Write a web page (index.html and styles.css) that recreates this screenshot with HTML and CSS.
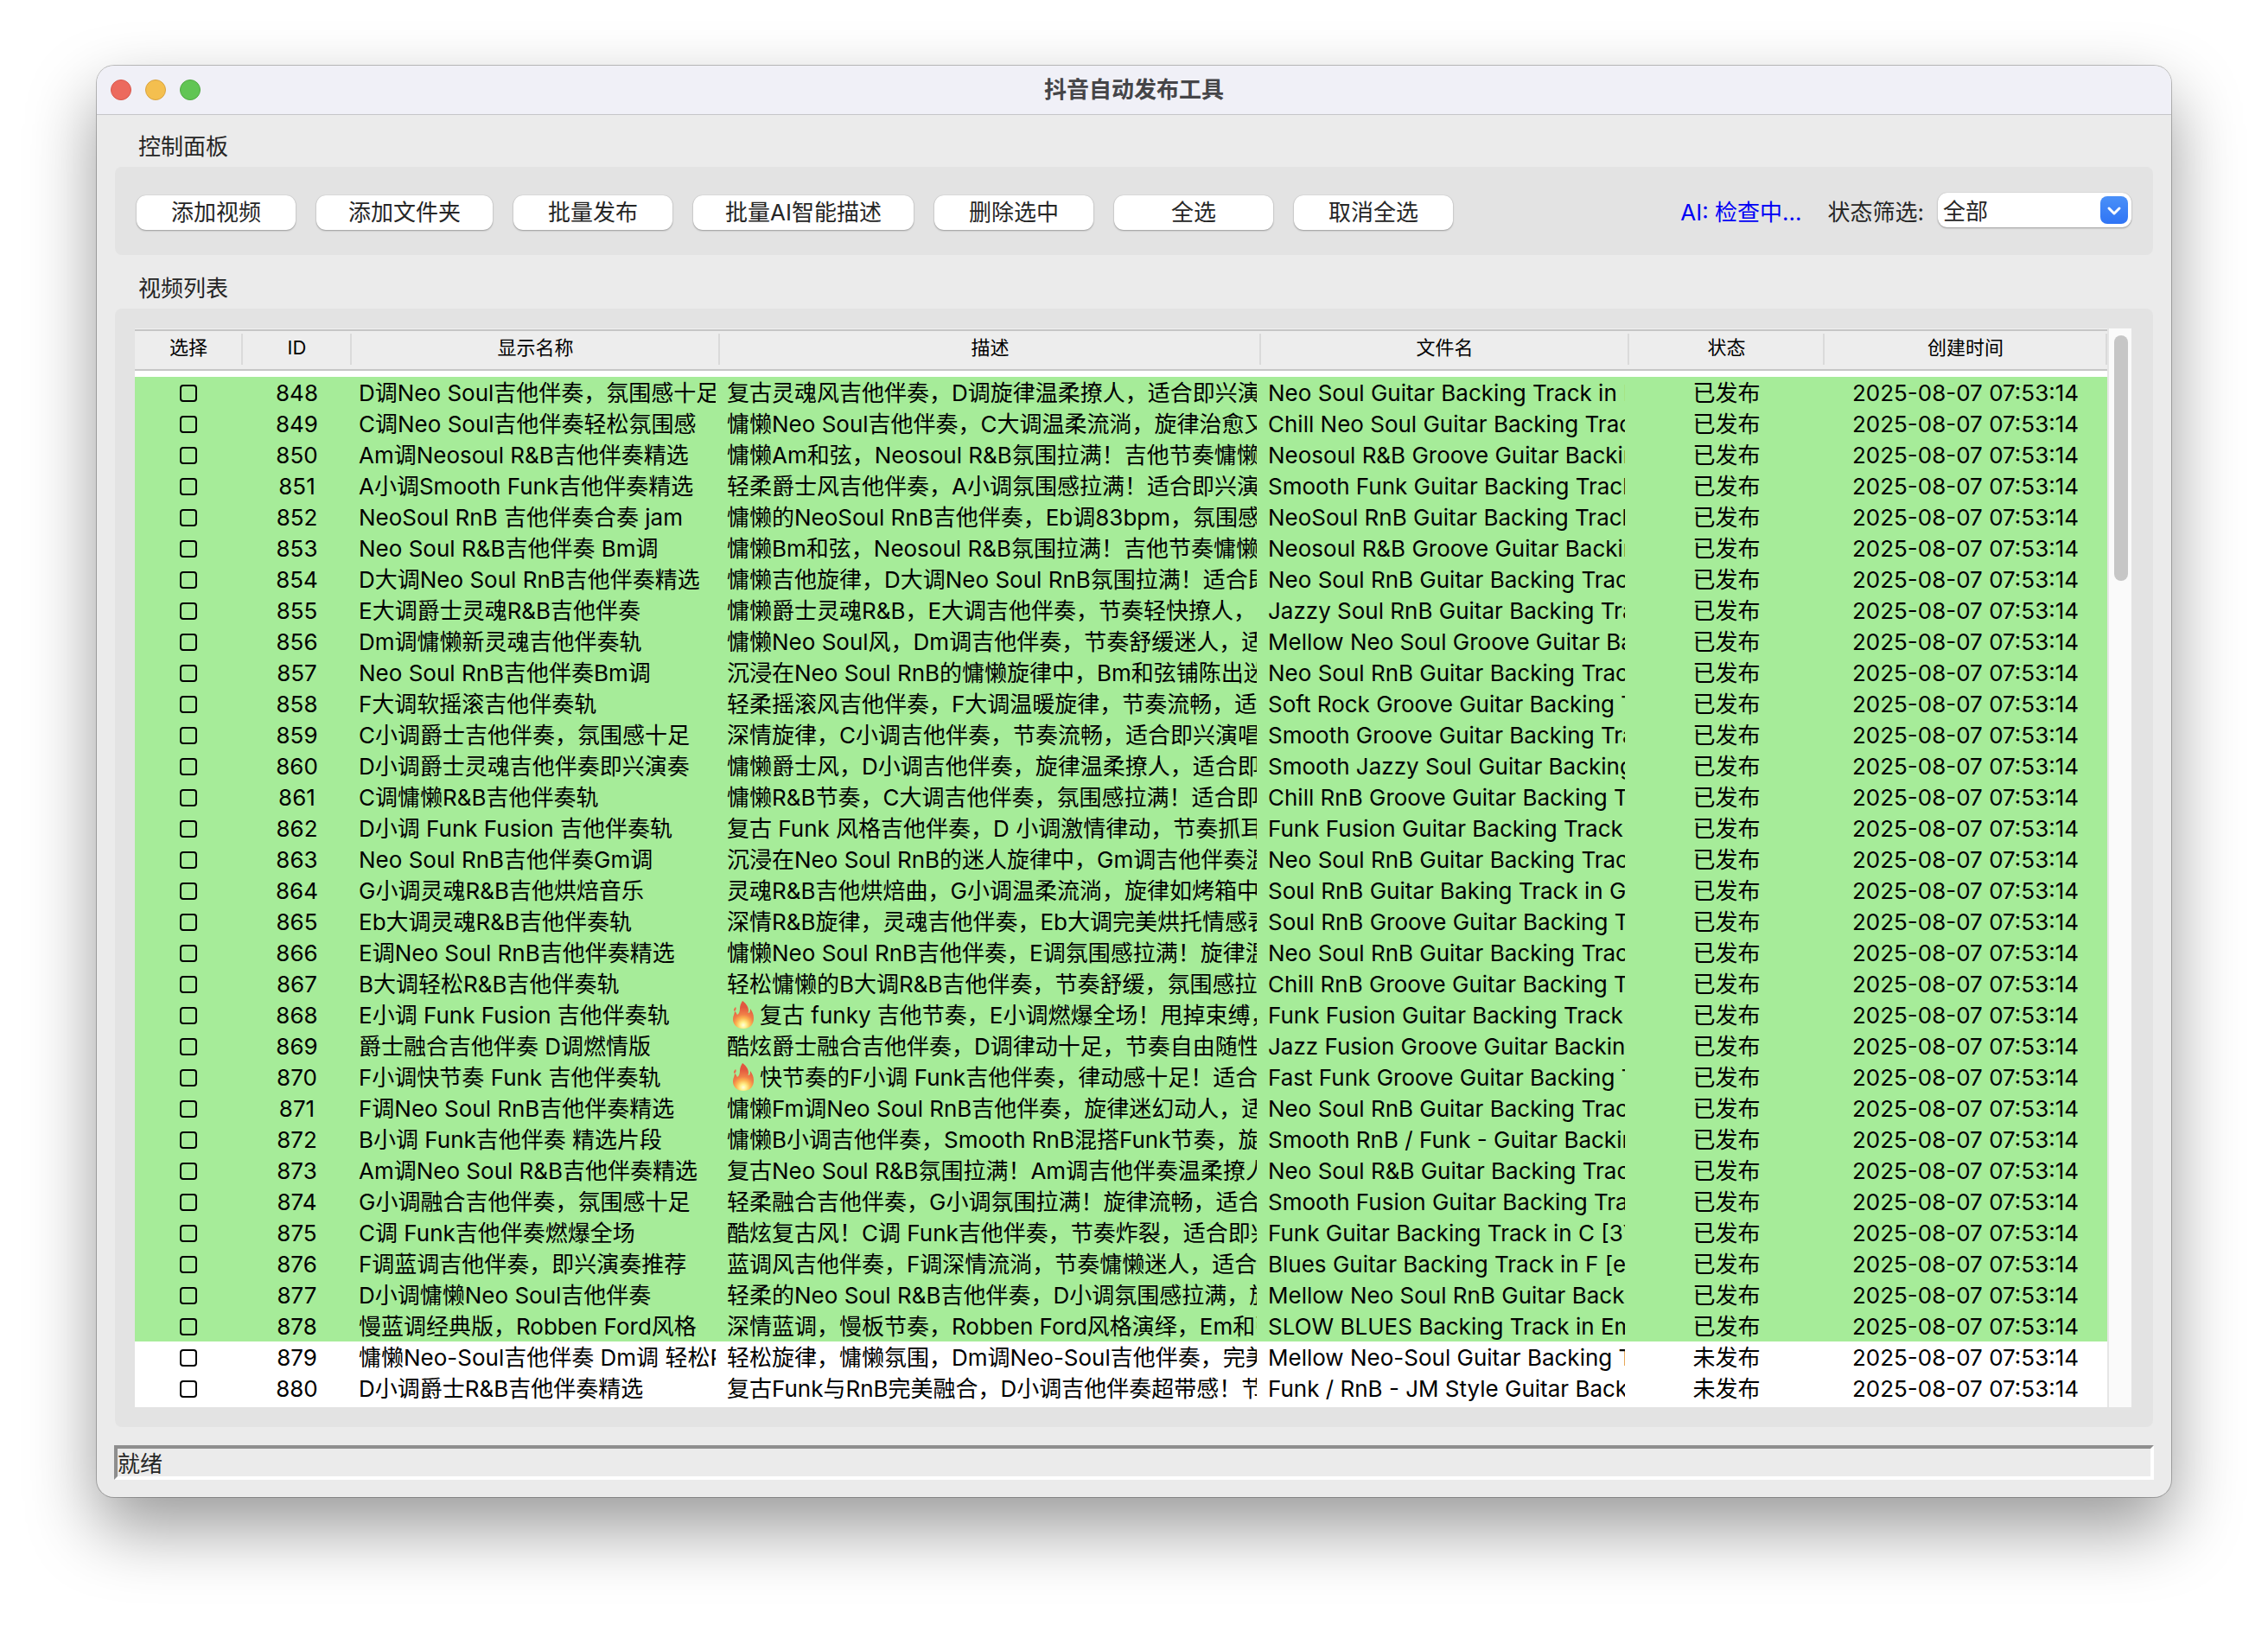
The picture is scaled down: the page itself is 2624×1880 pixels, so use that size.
FILE: index.html
```html
<!DOCTYPE html>
<html lang="zh-CN">
<head>
<meta charset="utf-8">
<meta name="viewport" content="width=device-width, initial-scale=1">
<title>抖音自动发布工具</title>
<link rel="stylesheet" href="styles.css">
</head>
<body>
<svg class="sprite" width="0" height="0" aria-hidden="true">
  <defs>
    <radialGradient id="flame" gradientUnits="userSpaceOnUse" cx="13" cy="28" r="26">
      <stop offset="0" stop-color="#fffde0"/>
      <stop offset="0.14" stop-color="#fff08a"/>
      <stop offset="0.32" stop-color="#fbb350"/>
      <stop offset="0.48" stop-color="#f08048"/>
      <stop offset="0.8" stop-color="#e2563f"/>
    </radialGradient>
    <symbol id="fire" viewBox="0 0 26 32">
      <path fill="url(#flame)" d="M12 0C14 1 19 6 19 11C19 13 18 14 19 14C21 14 21 11 21 9C23 12 25 15 25 20C25 27 21 32 13 32C5 32 1 27 1 21C1 17 3 15 3 12C5 13 5 15 6 16C8 15 9 12 9 9C9 6 10 3 12 0Z"/>
      <path fill="#ea6a4c" d="M4 7C5 8 5 10 3 12C1 11 2 9 4 7Z"/>
    </symbol>
  </defs>
</svg>

<div class="window">
  <header class="titlebar">
    <div class="lights">
      <button class="light light-close" type="button" aria-label="关闭"></button>
      <button class="light light-min" type="button" aria-label="最小化"></button>
      <button class="light light-zoom" type="button" aria-label="缩放"></button>
    </div>
    <h1 class="title">抖音自动发布工具</h1>
  </header>

  <main class="content">
    <h2 class="group-label">控制面板</h2>
    <section class="panel controls">
      <button class="btn" type="button">添加视频</button>
      <button class="btn" type="button">添加文件夹</button>
      <button class="btn" type="button">批量发布</button>
      <button class="btn" type="button">批量AI智能描述</button>
      <button class="btn" type="button">删除选中</button>
      <button class="btn" type="button">全选</button>
      <button class="btn" type="button">取消全选</button>
      <span class="ai-status">AI: 检查中...</span>
      <label class="filter-label" for="status-filter">状态筛选:</label>
      <div class="combo">
        <select id="status-filter" class="combo-select">
          <option>全部</option>
          <option>已发布</option>
          <option>未发布</option>
        </select>
        <span class="combo-arrow" aria-hidden="true">
          <svg viewBox="0 0 32 32" width="32" height="32"><path d="M10 14L16 20L22 14" fill="none" stroke="#fff" stroke-width="3" stroke-linecap="round" stroke-linejoin="round"/></svg>
        </span>
      </div>
    </section>

    <h2 class="group-label">视频列表</h2>
    <section class="panel list">
      <table class="videos">
        <colgroup>
          <col class="c-check"><col class="c-id"><col class="c-name"><col class="c-desc"><col class="c-file"><col class="c-state"><col class="c-time">
        </colgroup>
        <thead>
          <tr><th>选择</th><th>ID</th><th>显示名称</th><th>描述</th><th>文件名</th><th>状态</th><th>创建时间</th></tr>
        </thead>
        <tbody>
          <tr class="done"><td><input type="checkbox" aria-label="选择 848"></td><td>848</td><td>D调Neo Soul吉他伴奏，氛围感十足</td><td>复古灵魂风吉他伴奏，D调旋律温柔撩人，适合即兴演奏</td><td>Neo Soul Guitar Backing Track in D</td><td>已发布</td><td>2025-08-07 07:53:14</td></tr>
          <tr class="done"><td><input type="checkbox" aria-label="选择 849"></td><td>849</td><td>C调Neo Soul吉他伴奏轻松氛围感</td><td>慵懒Neo Soul吉他伴奏，C大调温柔流淌，旋律治愈又</td><td>Chill Neo Soul Guitar Backing Track</td><td>已发布</td><td>2025-08-07 07:53:14</td></tr>
          <tr class="done"><td><input type="checkbox" aria-label="选择 850"></td><td>850</td><td>Am调Neosoul R&amp;B吉他伴奏精选</td><td>慵懒Am和弦，Neosoul R&amp;B氛围拉满！吉他节奏慵懒</td><td>Neosoul R&amp;B Groove Guitar Backing</td><td>已发布</td><td>2025-08-07 07:53:14</td></tr>
          <tr class="done"><td><input type="checkbox" aria-label="选择 851"></td><td>851</td><td>A小调Smooth Funk吉他伴奏精选</td><td>轻柔爵士风吉他伴奏，A小调氛围感拉满！适合即兴演奏</td><td>Smooth Funk Guitar Backing Track</td><td>已发布</td><td>2025-08-07 07:53:14</td></tr>
          <tr class="done"><td><input type="checkbox" aria-label="选择 852"></td><td>852</td><td>NeoSoul RnB 吉他伴奏合奏 jam</td><td>慵懒的NeoSoul RnB吉他伴奏，Eb调83bpm，氛围感</td><td>NeoSoul RnB Guitar Backing Track</td><td>已发布</td><td>2025-08-07 07:53:14</td></tr>
          <tr class="done"><td><input type="checkbox" aria-label="选择 853"></td><td>853</td><td>Neo Soul R&amp;B吉他伴奏 Bm调</td><td>慵懒Bm和弦，Neosoul R&amp;B氛围拉满！吉他节奏慵懒</td><td>Neosoul R&amp;B Groove Guitar Backing</td><td>已发布</td><td>2025-08-07 07:53:14</td></tr>
          <tr class="done"><td><input type="checkbox" aria-label="选择 854"></td><td>854</td><td>D大调Neo Soul RnB吉他伴奏精选</td><td>慵懒吉他旋律，D大调Neo Soul RnB氛围拉满！适合即兴</td><td>Neo Soul RnB Guitar Backing Track</td><td>已发布</td><td>2025-08-07 07:53:14</td></tr>
          <tr class="done"><td><input type="checkbox" aria-label="选择 855"></td><td>855</td><td>E大调爵士灵魂R&amp;B吉他伴奏</td><td>慵懒爵士灵魂R&amp;B，E大调吉他伴奏，节奏轻快撩人，</td><td>Jazzy Soul RnB Guitar Backing Track</td><td>已发布</td><td>2025-08-07 07:53:14</td></tr>
          <tr class="done"><td><input type="checkbox" aria-label="选择 856"></td><td>856</td><td>Dm调慵懒新灵魂吉他伴奏轨</td><td>慵懒Neo Soul风，Dm调吉他伴奏，节奏舒缓迷人，适合</td><td>Mellow Neo Soul Groove Guitar Backing</td><td>已发布</td><td>2025-08-07 07:53:14</td></tr>
          <tr class="done"><td><input type="checkbox" aria-label="选择 857"></td><td>857</td><td>Neo Soul RnB吉他伴奏Bm调</td><td>沉浸在Neo Soul RnB的慵懒旋律中，Bm和弦铺陈出迷人</td><td>Neo Soul RnB Guitar Backing Track</td><td>已发布</td><td>2025-08-07 07:53:14</td></tr>
          <tr class="done"><td><input type="checkbox" aria-label="选择 858"></td><td>858</td><td>F大调软摇滚吉他伴奏轨</td><td>轻柔摇滚风吉他伴奏，F大调温暖旋律，节奏流畅，适合</td><td>Soft Rock Groove Guitar Backing Track</td><td>已发布</td><td>2025-08-07 07:53:14</td></tr>
          <tr class="done"><td><input type="checkbox" aria-label="选择 859"></td><td>859</td><td>C小调爵士吉他伴奏，氛围感十足</td><td>深情旋律，C小调吉他伴奏，节奏流畅，适合即兴演唱</td><td>Smooth Groove Guitar Backing Track</td><td>已发布</td><td>2025-08-07 07:53:14</td></tr>
          <tr class="done"><td><input type="checkbox" aria-label="选择 860"></td><td>860</td><td>D小调爵士灵魂吉他伴奏即兴演奏</td><td>慵懒爵士风，D小调吉他伴奏，旋律温柔撩人，适合即兴</td><td>Smooth Jazzy Soul Guitar Backing</td><td>已发布</td><td>2025-08-07 07:53:14</td></tr>
          <tr class="done"><td><input type="checkbox" aria-label="选择 861"></td><td>861</td><td>C调慵懒R&amp;B吉他伴奏轨</td><td>慵懒R&amp;B节奏，C大调吉他伴奏，氛围感拉满！适合即兴</td><td>Chill RnB Groove Guitar Backing Track</td><td>已发布</td><td>2025-08-07 07:53:14</td></tr>
          <tr class="done"><td><input type="checkbox" aria-label="选择 862"></td><td>862</td><td>D小调 Funk Fusion 吉他伴奏轨</td><td>复古 Funk 风格吉他伴奏，D 小调激情律动，节奏抓耳</td><td>Funk Fusion Guitar Backing Track</td><td>已发布</td><td>2025-08-07 07:53:14</td></tr>
          <tr class="done"><td><input type="checkbox" aria-label="选择 863"></td><td>863</td><td>Neo Soul RnB吉他伴奏Gm调</td><td>沉浸在Neo Soul RnB的迷人旋律中，Gm调吉他伴奏温柔</td><td>Neo Soul RnB Guitar Backing Track</td><td>已发布</td><td>2025-08-07 07:53:14</td></tr>
          <tr class="done"><td><input type="checkbox" aria-label="选择 864"></td><td>864</td><td>G小调灵魂R&amp;B吉他烘焙音乐</td><td>灵魂R&amp;B吉他烘焙曲，G小调温柔流淌，旋律如烤箱中</td><td>Soul RnB Guitar Baking Track in G</td><td>已发布</td><td>2025-08-07 07:53:14</td></tr>
          <tr class="done"><td><input type="checkbox" aria-label="选择 865"></td><td>865</td><td>Eb大调灵魂R&amp;B吉他伴奏轨</td><td>深情R&amp;B旋律，灵魂吉他伴奏，Eb大调完美烘托情感表达</td><td>Soul RnB Groove Guitar Backing Track</td><td>已发布</td><td>2025-08-07 07:53:14</td></tr>
          <tr class="done"><td><input type="checkbox" aria-label="选择 866"></td><td>866</td><td>E调Neo Soul RnB吉他伴奏精选</td><td>慵懒Neo Soul RnB吉他伴奏，E调氛围感拉满！旋律温柔</td><td>Neo Soul RnB Guitar Backing Track</td><td>已发布</td><td>2025-08-07 07:53:14</td></tr>
          <tr class="done"><td><input type="checkbox" aria-label="选择 867"></td><td>867</td><td>B大调轻松R&amp;B吉他伴奏轨</td><td>轻松慵懒的B大调R&amp;B吉他伴奏，节奏舒缓，氛围感拉</td><td>Chill RnB Groove Guitar Backing Track</td><td>已发布</td><td>2025-08-07 07:53:14</td></tr>
          <tr class="done"><td><input type="checkbox" aria-label="选择 868"></td><td>868</td><td>E小调 Funk Fusion 吉他伴奏轨</td><td><svg class="fire" role="img" aria-label="火"><use href="#fire"/></svg>复古 funky 吉他节奏，E小调燃爆全场！甩掉束缚，</td><td>Funk Fusion Guitar Backing Track</td><td>已发布</td><td>2025-08-07 07:53:14</td></tr>
          <tr class="done"><td><input type="checkbox" aria-label="选择 869"></td><td>869</td><td>爵士融合吉他伴奏 D调燃情版</td><td>酷炫爵士融合吉他伴奏，D调律动十足，节奏自由随性</td><td>Jazz Fusion Groove Guitar Backing</td><td>已发布</td><td>2025-08-07 07:53:14</td></tr>
          <tr class="done"><td><input type="checkbox" aria-label="选择 870"></td><td>870</td><td>F小调快节奏 Funk 吉他伴奏轨</td><td><svg class="fire" role="img" aria-label="火"><use href="#fire"/></svg>快节奏的F小调 Funk吉他伴奏，律动感十足！适合</td><td>Fast Funk Groove Guitar Backing Track</td><td>已发布</td><td>2025-08-07 07:53:14</td></tr>
          <tr class="done"><td><input type="checkbox" aria-label="选择 871"></td><td>871</td><td>F调Neo Soul RnB吉他伴奏精选</td><td>慵懒Fm调Neo Soul RnB吉他伴奏，旋律迷幻动人，适合</td><td>Neo Soul RnB Guitar Backing Track</td><td>已发布</td><td>2025-08-07 07:53:14</td></tr>
          <tr class="done"><td><input type="checkbox" aria-label="选择 872"></td><td>872</td><td>B小调 Funk吉他伴奏 精选片段</td><td>慵懒B小调吉他伴奏，Smooth RnB混搭Funk节奏，旋律</td><td>Smooth RnB / Funk - Guitar Backing</td><td>已发布</td><td>2025-08-07 07:53:14</td></tr>
          <tr class="done"><td><input type="checkbox" aria-label="选择 873"></td><td>873</td><td>Am调Neo Soul R&amp;B吉他伴奏精选</td><td>复古Neo Soul R&amp;B氛围拉满！Am调吉他伴奏温柔撩人</td><td>Neo Soul R&amp;B Guitar Backing Track</td><td>已发布</td><td>2025-08-07 07:53:14</td></tr>
          <tr class="done"><td><input type="checkbox" aria-label="选择 874"></td><td>874</td><td>G小调融合吉他伴奏，氛围感十足</td><td>轻柔融合吉他伴奏，G小调氛围拉满！旋律流畅，适合</td><td>Smooth Fusion Guitar Backing Track</td><td>已发布</td><td>2025-08-07 07:53:14</td></tr>
          <tr class="done"><td><input type="checkbox" aria-label="选择 875"></td><td>875</td><td>C调 Funk吉他伴奏燃爆全场</td><td>酷炫复古风！C调 Funk吉他伴奏，节奏炸裂，适合即兴</td><td>Funk Guitar Backing Track in C [3Y</td><td>已发布</td><td>2025-08-07 07:53:14</td></tr>
          <tr class="done"><td><input type="checkbox" aria-label="选择 876"></td><td>876</td><td>F调蓝调吉他伴奏，即兴演奏推荐</td><td>蓝调风吉他伴奏，F调深情流淌，节奏慵懒迷人，适合即</td><td>Blues Guitar Backing Track in F [e</td><td>已发布</td><td>2025-08-07 07:53:14</td></tr>
          <tr class="done"><td><input type="checkbox" aria-label="选择 877"></td><td>877</td><td>D小调慵懒Neo Soul吉他伴奏</td><td>轻柔的Neo Soul R&amp;B吉他伴奏，D小调氛围感拉满，旋律</td><td>Mellow Neo Soul RnB Guitar Backing</td><td>已发布</td><td>2025-08-07 07:53:14</td></tr>
          <tr class="done"><td><input type="checkbox" aria-label="选择 878"></td><td>878</td><td>慢蓝调经典版，Robben Ford风格</td><td>深情蓝调，慢板节奏，Robben Ford风格演绎，Em和弦</td><td>SLOW BLUES Backing Track in Em</td><td>已发布</td><td>2025-08-07 07:53:14</td></tr>
          <tr><td><input type="checkbox" aria-label="选择 879"></td><td>879</td><td>慵懒Neo-Soul吉他伴奏 Dm调 轻松R&amp;B</td><td>轻松旋律，慵懒氛围，Dm调Neo-Soul吉他伴奏，完美</td><td>Mellow Neo-Soul Guitar Backing Track</td><td>未发布</td><td>2025-08-07 07:53:14</td></tr>
          <tr><td><input type="checkbox" aria-label="选择 880"></td><td>880</td><td>D小调爵士R&amp;B吉他伴奏精选</td><td>复古Funk与RnB完美融合，D小调吉他伴奏超带感！节奏</td><td>Funk / RnB - JM Style Guitar Backing</td><td>未发布</td><td>2025-08-07 07:53:14</td></tr>
        </tbody>
      </table>
      <div class="scrollbar" aria-hidden="true"><div class="thumb"></div></div>
    </section>

    <footer class="statusbar">就绪</footer>
  </main>
</div>
</body>
</html>
```
FILE: styles.css
```css
* {
  box-sizing: border-box;
}

body {
  margin: 0;
  padding: 76px 112px 148px;
  background: #fff;
  color: #262626;
  font: 26px/36px Inter, "Noto Sans CJK SC", sans-serif;
}

button,
select {
  font: inherit;
  color: inherit;
}

h1,
h2 {
  margin: 0;
  font-size: inherit;
}

.sprite {
  position: absolute;
}

.window {
  border-radius: 20px;
  background: #ebebeb;
  box-shadow: 0 0 0 1px rgba(0, 0, 0, 0.24), 0 36px 80px rgba(0, 0, 0, 0.4);
}

/* title bar */
.titlebar {
  display: grid;
  grid-template-columns: 1fr auto 1fr;
  align-items: center;
  height: 57px;
  padding: 0 16px;
  border-bottom: 1px solid #c6c6c9;
  border-radius: 20px 20px 0 0;
  background: #f0f0f7;
}

.lights {
  display: flex;
  gap: 16px;
}

.light {
  width: 24px;
  height: 24px;
  padding: 0;
  border: 1px solid;
  border-radius: 50%;
}

.light-close {
  border-color: #d9574c;
  background: #ec6a5e;
}

.light-min {
  border-color: #d9a33f;
  background: #f4bf4f;
}

.light-zoom {
  border-color: #50a943;
  background: #61c554;
}

.title {
  color: #454548;
  font-weight: 600;
}

/* groups */
.content {
  padding: 19px 20px 20px;
}

.group-label {
  margin: 0 28px 5px;
  font-weight: 400;
}

.panel {
  display: flex;
  margin: 0 1px 21px;
  border-radius: 8px;
  background: #e3e3e3;
}

.controls {
  align-items: center;
  gap: 24px;
  padding: 30px 25px 26px;
}

.btn {
  min-width: 184px;
  height: 40px;
  padding: 0 37px;
  border: 0;
  border-radius: 11px;
  background: #fff;
  line-height: 36px;
  white-space: nowrap;
  box-shadow: 0 0 1px rgba(0, 0, 0, 0.25), 0 1px 2px rgba(0, 0, 0, 0.3);
}

.ai-status {
  margin-left: auto;
  color: #0000f5;
  white-space: nowrap;
}

.filter-label {
  margin-left: 6px;
  margin-right: -8px;
  white-space: nowrap;
}

.combo {
  position: relative;
  width: 224px;
  margin-bottom: 6px;
}

.combo-select {
  display: block;
  width: 100%;
  height: 40px;
  padding: 4px 40px 0 6px;
  border: 0;
  border-radius: 11px;
  appearance: none;
  background: #fff;
  box-shadow: 0 0 1px rgba(0, 0, 0, 0.25), 0 1px 2px rgba(0, 0, 0, 0.3);
}

.combo-arrow {
  position: absolute;
  top: 4px;
  right: 4px;
  width: 32px;
  height: 32px;
  border-radius: 8px;
  background: linear-gradient(#4a90f8, #2f74f5);
  pointer-events: none;
}

.combo-arrow svg {
  display: block;
}

/* video table */
.list {
  padding: 23px 25px 23px 23px;
}

.videos {
  flex: 1;
  table-layout: fixed;
  width: 0;
  padding-bottom: 4px;
  border-top: 1px solid #f0f0f0;
  border-spacing: 0;
  background: #fff;
  color: #000;
}

.c-check { width: 125px; }
.c-id { width: 126px; }
.c-name { width: 426px; }
.c-file { width: 426px; }
.c-state { width: 226px; }
.c-time { width: 327px; }

.videos th {
  height: 48px;
  padding: 0 1px 6px 0;
  border: solid #c6c6c6;
  border-width: 2px 0;
  background: linear-gradient(#dadada, #dadada) right 3px / 2px 36px no-repeat #ededed;
  font-size: 22px;
  font-weight: 400;
  line-height: 32px;
}

.videos tbody::before {
  content: "";
  display: table-row;
  height: 7px;
}

/* the transparent right border keeps cut-off text clear of the next column */
.videos td {
  height: 36px;
  padding: 2px 0 0 4px;
  border: 0 solid transparent;
  border-right-width: 5px;
  overflow: hidden;
  line-height: 34px;
  text-align: center;
  white-space: nowrap;
}

.videos td:nth-child(n + 3):nth-child(-n + 5) {
  padding-left: 8px;
  text-align: left;
}

.done td {
  background: #a6ec99;
}

.videos input {
  display: block;
  width: 20px;
  height: 20px;
  margin: 0 auto;
  border: 2px solid #000;
  border-radius: 4px;
  appearance: none;
}

.fire {
  width: 26px;
  height: 32px;
  margin: 0 6px 0 6px;
  vertical-align: top;
}

.scrollbar {
  width: 28px;
  padding: 8px 4px 8px 6px;
  border-left: 2px solid #e6e6e6;
  background: #fafafa;
}

.thumb {
  height: 284px;
  border-radius: 8px;
  background: #c6c6c6;
}

/* sunken status line */
.statusbar {
  height: 40px;
  border: 4px solid;
  border-color: #8e8e8e #fff #fff #8e8e8e;
  line-height: 36px;
}
```
